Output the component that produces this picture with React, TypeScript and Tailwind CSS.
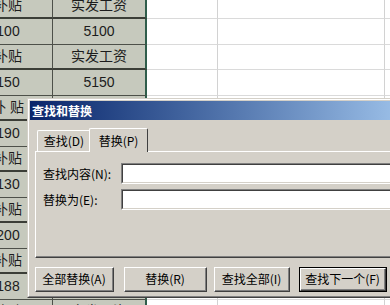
import React from 'react';

const cjk = { fontFamily: '"Noto Sans CJK SC", "Liberation Sans", sans-serif' };
const sheetFont = { fontFamily: '"Liberation Sans", "Noto Sans CJK SC", sans-serif' };

const rows = [
  { a: '补贴', b: '实发工资', label: true },
  { a: '100', b: '5100', label: false },
  { a: '补贴', b: '实发工资', label: true },
  { a: '150', b: '5150', label: false },
  { a: '补 贴', b: '实发工资', label: true },
  { a: '190', b: '5190', label: false },
  { a: '补贴', b: '实发工资', label: true },
  { a: '130', b: '5130', label: false },
  { a: '补贴', b: '实发工资', label: true },
  { a: '200', b: '5200', label: false },
  { a: '补贴', b: '实发工资', label: true },
  { a: '188', b: '5188', label: false },
  { a: '补贴', b: '实发工资', label: true },
];

const Sheet = () => (
  <div className="-ml-[36px] -mt-[7px] flex flex-col text-[14px] text-[#1c1c1c]" style={sheetFont}>
    {rows.map((r, i) => {
      const h = i === 0 || i % 2 === 1 ? 'h-[26px]' : 'h-[25px]';
      const line = r.label ? 'border-b-2 border-b-[#3b3e37]' : 'border-b border-b-[#4d5049]';
      return (
        <div key={i} className={`flex ${h}`}>
          <div className={`w-[89px] shrink-0 flex items-center justify-center bg-[#c6c9bd] border-r border-r-[#4d5049] ${line}`}>
            {r.a}
          </div>
          <div className={`w-[94px] shrink-0 flex items-center justify-center bg-[#c6c9bd] border-r-2 border-r-[#2f5d4b] ${line}`}>
            {r.b}
          </div>
          <div className="w-[71px] shrink-0 bg-white border-r border-r-[#d2d2d2] border-b border-b-[#dadada]" />
          <div className="w-[167px] shrink-0 bg-white border-r border-r-[#d2d2d2] border-b border-b-[#dadada]" />
          <div className="w-[60px] shrink-0 bg-white border-b border-b-[#dadada]" />
        </div>
      );
    })}
  </div>
);

const Btn = ({ children, w, def }: { children: React.ReactNode; w: string; def?: boolean }) => (
  <div className={`${w} h-[25px] shrink-0 ${def ? 'border border-black' : ''}`}>
    <div className="h-full border-t border-l border-t-white border-l-white border-r border-b border-r-[#404040] border-b-[#404040]">
      <div className="h-full flex items-center justify-center border-r border-b border-r-[#808080] border-b-[#808080] text-[12px] text-black">
        {children}
      </div>
    </div>
  </div>
);

const Field = ({ label }: { label: string }) => (
  <div className="flex items-center h-[21px]">
    <div className="w-[78px] shrink-0 text-[12px] text-black">{label}</div>
    <div className="flex-1 h-full border-t border-l border-t-[#808080] border-l-[#808080] border-b border-b-white">
      <div className="h-full bg-white border-t border-l border-t-[#404040] border-l-[#404040] border-b border-b-[#d4d0c8]" />
    </div>
  </div>
);

const Dialog = () => (
  <div className="absolute left-[27px] top-[98px] w-[400px] h-[200px] bg-[#d4d0c8] border border-t-[#d4d0c8] border-l-[#d4d0c8] border-r-[#404040] border-b-[#404040]" style={cjk}>
    <div className="h-full border border-t-white border-l-white border-r-[#808080] border-b-[#808080] p-px">
      <div className="h-[19px] flex items-center pl-[2px] bg-gradient-to-r from-[#0a246a] to-[#a6caf0] text-white text-[12px] font-bold">
        查找和替换
      </div>
      <div className="pl-[5px] pt-[8px]">
        <div className="flex items-end h-[23px] relative z-10">
          <div className="ml-[2px] w-[54px] h-[21px] flex items-center justify-center text-[12px] text-black border-t border-l border-t-white border-l-white rounded-tl-[2px] border-r border-r-[#808080]">
            查找(D)
          </div>
          <div className="-ml-[2px] w-[59px] h-[24px] -mb-px flex items-center justify-center text-[12px] text-black bg-[#d4d0c8] border-t border-l border-t-white border-l-white rounded-tl-[2px] border-r border-r-[#404040] rounded-tr-[2px]">
            替换(P)
          </div>
        </div>
        <div className="h-[107px] border-t border-l border-t-white border-l-white border-b border-b-[#404040]">
          <div className="h-full border-b border-b-[#808080] pl-[7px] pt-[11px] flex flex-col gap-[5px]">
            <Field label="查找内容(N):" />
            <Field label="替换为(E):" />
          </div>
        </div>
        <div className="flex mt-[9px]">
          <Btn w="w-[79px]">全部替换(A)</Btn>
          <div className="w-[10px] shrink-0" />
          <Btn w="w-[83px]">替换(R)</Btn>
          <div className="w-[7px] shrink-0" />
          <Btn w="w-[76px]">查找全部(I)</Btn>
          <div className="w-[9px] shrink-0" />
          <Btn w="w-[88px]" def>查找下一个(F)</Btn>
        </div>
      </div>
    </div>
  </div>
);

export default function App() {
  return (
    <div className="relative w-[390px] h-[305px] overflow-hidden bg-white">
      <Sheet />
      <Dialog />
    </div>
  );
}
